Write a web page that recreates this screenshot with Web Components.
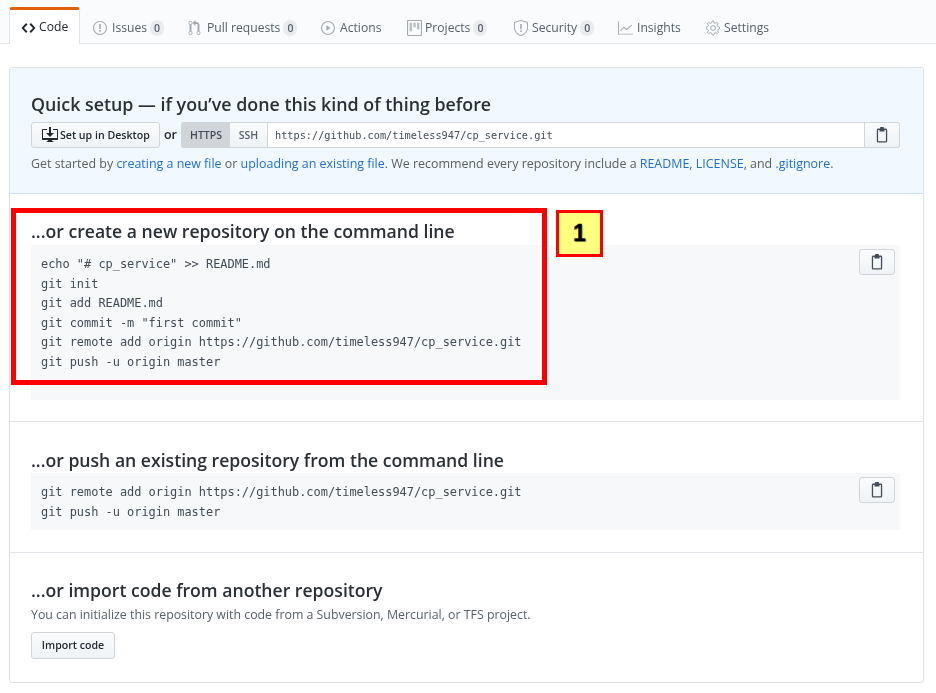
<!DOCTYPE html>
<html lang="en"><head><meta charset="utf-8"><title>Quick setup</title>
<style>
html,body{margin:0;background:#fff}
body{width:936px;height:693px;overflow:hidden;position:relative;font-family:"Open Sans","Noto Sans",sans-serif;color:#24292e}
a{color:#1f6fd6;text-decoration:none}
gh-tabs,gh-card{filter:blur(.3px)}
</style></head><body>
<gh-tabs>
  <gh-tab selected label="Code" icon="code"></gh-tab>
  <gh-tab label="Issues" icon="issue" count="0"></gh-tab>
  <gh-tab label="Pull requests" icon="pr" count="0"></gh-tab>
  <gh-tab label="Actions" icon="play"></gh-tab>
  <gh-tab label="Projects" icon="project" count="0"></gh-tab>
  <gh-tab label="Security" icon="shield" count="0"></gh-tab>
  <gh-tab label="Insights" icon="graph"></gh-tab>
  <gh-tab label="Settings" icon="gear"></gh-tab>
</gh-tabs>
<gh-card>
  <gh-section variant="blue" heading="Quick setup — if you’ve done this kind of thing before" style="height:126px">
    <gh-clone-bar url="https://github.com/timeless947/cp_service.git"></gh-clone-bar>
    <gh-note>Get started by <a href="#">creating a new file</a> or <a href="#">uploading an existing file</a>. We recommend every repository include a <a href="#">README</a>, <a href="#">LICENSE</a>, and <a href="#">.gitignore</a>.</gh-note>
  </gh-section>
  <gh-section variant="cmd" heading="...or create a new repository on the command line" style="height:228px">
    <gh-code style="height:155px">echo "# cp_service" &gt;&gt; README.md
git init
git add README.md
git commit -m "first commit"
git remote add origin https://github.com/timeless947/cp_service.git
git push -u origin master</gh-code>
  </gh-section>
  <gh-section variant="cmd2" heading="...or push an existing repository from the command line" style="height:131px">
    <gh-code style="height:57px">git remote add origin https://github.com/timeless947/cp_service.git
git push -u origin master</gh-code>
  </gh-section>
  <gh-section variant="imp" heading="...or import code from another repository" style="height:128px">
    <gh-note tight>You can initialize this repository with code from a Subversion, Mercurial, or TFS project.</gh-note>
    <gh-button>Import code</gh-button>
  </gh-section>
</gh-card>
<gh-callout number="1"></gh-callout>
<script>
const ICONS={
code:['0 0 14 16','<path d="M9.5 3L8 4.5 11.5 8 8 11.5 9.5 13 14 8 9.5 3zm-5 0L0 8l4.5 5L6 11.5 2.5 8 6 4.5 4.5 3z"/>'],
issue:['0 0 14 16','<path d="M7 2.1c3.25 0 5.9 2.65 5.9 5.9s-2.65 5.9-5.9 5.9A5.91 5.91 0 0 1 1.1 8C1.1 4.75 3.75 2.1 7 2.1zM7 1C3.14 1 0 4.14 0 8s3.14 7 7 7 7-3.14 7-7-3.14-7-7-7zm.8 3H6.2v5h1.6V4zm0 6H6.2v1.8h1.6V10z"/>'],
pr:['0 0 12 16','<path d="M11 11.28V5c-.03-.78-.34-1.47-.94-2.06C9.46 2.35 8.78 2.03 8 2H7V0L4 3l3 3V4h1c.27.02.48.11.69.31.21.2.3.42.31.69v6.28A1.993 1.993 0 0 0 10 15a1.993 1.993 0 0 0 1-3.72zm-1 2.92c-.66 0-1.2-.55-1.2-1.2 0-.65.55-1.2 1.2-1.2.65 0 1.2.55 1.2 1.2 0 .65-.55 1.2-1.2 1.2zM4 3c0-1.11-.89-2-2-2a1.993 1.993 0 0 0-1 3.72v6.56A1.993 1.993 0 0 0 2 15a1.993 1.993 0 0 0 1-3.72V4.72c.59-.34 1-.98 1-1.72zm-.8 10c0 .66-.55 1.2-1.2 1.2-.65 0-1.2-.55-1.2-1.2 0-.65.55-1.2 1.2-1.2.65 0 1.2.55 1.2 1.2zM2 4.2C1.34 4.2.8 3.65.8 3c0-.65.55-1.2 1.2-1.2.65 0 1.2.55 1.2 1.2 0 .65-.55 1.2-1.2 1.2z"/>'],
play:['0 0 14 16','<path fill-rule="evenodd" d="M7 1a7 7 0 1 0 0 14A7 7 0 0 0 7 1zm0 1.1a5.9 5.9 0 1 1 0 11.8A5.9 5.9 0 0 1 7 2.1z"/><path d="M5.4 5.3v5.4L9.6 8z"/>'],
project:['0 0 15 16','<path d="M10 9h2.4V2.6H10V9zM6.3 7h2.4V2.6H6.3V7zM2.6 11h2.4V2.6H2.6V11z" transform="translate(0 .2)" opacity=".75"/><path fill-rule="evenodd" d="M1.2 0h12.6c.66 0 1.2.54 1.2 1.2v13.6c0 .66-.54 1.2-1.2 1.2H1.2C.54 16 0 15.46 0 14.8V1.2C0 .54.54 0 1.2 0zm-.1 1.1v13.8h12.8V1.1H1.1z"/>'],
shield:['0 0 14 16','<path fill-rule="evenodd" d="M0 2l7-2 7 2v6.02C14 12.69 8.69 16 7 16c-1.69 0-7-3.31-7-7.98V2zm1 .75L7 1l6 1.75v5.27C13 12.1 8.45 15 7 15c-1.45 0-6-2.9-6-6.98V2.75z"/><path d="M6.2 4h1.6v5.2H6.2zM6.2 10.2h1.6V12H6.2z"/>'],
graph:['0 0 16 16','<path d="M16 15H0V1h1v13h15z"/><path d="M2.6 11.2l3.6-4 3 2.4L14.6 5" fill="none" stroke="currentColor" stroke-width="1.1"/>'],
gear:['0 0 14 16','<path fill="none" stroke="currentColor" stroke-width="1" stroke-linejoin="round" d="M13.5 8.8V7.2l-1.9-.6-.5-1.2.9-1.8-1.1-1.1-1.8.9-1.2-.5L7.8 1H6.2l-.6 1.9-1.2.5-1.8-.9-1.1 1.1.9 1.8-.5 1.2-1.9.6v1.6l1.9.6.5 1.2-.9 1.8 1.1 1.1 1.8-.9 1.2.5.6 1.9h1.6l.6-1.9 1.2-.5 1.8.9 1.1-1.1-.9-1.8.5-1.2z"/><circle cx="7" cy="8" r="2.4" fill="none" stroke="currentColor"/>'],
clip:['0 0 14 16','<path fill-rule="evenodd" d="M3.4 1.6H5V.9c0-.5.4-.9.9-.9h2.2c.5 0 .9.4.9.9v.7h1.6c.9 0 1.6.7 1.6 1.6v10.7c0 .9-.7 1.6-1.6 1.6H3.4c-.9 0-1.6-.7-1.6-1.6V3.2c0-.9.7-1.6 1.6-1.6zm0 1.3c-.2 0-.3.1-.3.3v10.7c0 .2.1.3.3.3h7.2c.2 0 .3-.1.3-.3V3.2c0-.2-.1-.3-.3-.3H9.5v1.6h-5V2.9H3.4z"/>'],
desktop:['0 0 16 16','<path d="M4 6h3V0h2v6h3l-4 4-4-4zm11-4h-4v1h4v8H1V3h4V2H1c-.55 0-1 .45-1 1v9c0 .55.45 1 1 1h5.34c-.25.61-.86 1.39-2.34 2h8c-1.48-.61-2.09-1.39-2.34-2H15c.55 0 1-.45 1-1V3c0-.55-.45-1-1-1z"/>']
};
function def(name,css,html){
  const C=class extends HTMLElement{
    constructor(){super();this.attachShadow({mode:'open'});}
    connectedCallback(){this.shadowRoot.innerHTML='<style>'+css+'</style>'+(typeof html==='function'?html(this):html);}
  };
  customElements.define(name,C);
}
const svg=(n,w,h,m)=>`<svg xmlns="http://www.w3.org/2000/svg" viewBox="${ICONS[n][0]}" width="${w}" height="${h}" fill="currentColor" aria-hidden="true"${m!==undefined?` style="margin-right:${m}px"`:''}>${ICONS[n][1]}</svg>`;

def('gh-tabs',`:host{display:flex;height:44px;box-sizing:border-box;padding:7px 0 0 9px;background:#fafbfc;border-bottom:1px solid #e1e4e8}`,`<slot></slot>`);

const tabW={Code:71,Issues:94,'Pull requests':134,Actions:86,Projects:107,Security:104,Insights:88,Settings:88};
const iconX={code:14,issue:13,pr:14,play:13,project:13,shield:13,graph:13,gear:13};
const iconW={code:15,issue:14,pr:13,play:14,project:15,shield:14,graph:15,gear:14};
const iconM={code:3,issue:5,pr:6,play:5,project:3,shield:4,graph:4,gear:4};
def('gh-tab',`
:host{display:block;flex:none;height:37px;box-sizing:border-box;color:#586069;font:12.15px/1 "Open Sans",sans-serif}
:host([selected]){background:#fff;color:#24292e;border:1px solid #e1e4e8;border-top:3px solid #e36209;border-bottom:0;border-radius:3px 3px 0 0;height:37px;position:relative;z-index:1}
.in{display:flex;align-items:center;height:100%;box-sizing:border-box;padding-top:1px}
:host(:not([selected])) .in{padding-top:5px}
svg{flex:none;color:#a3aab1}
:host([selected]) svg{color:#24292e}
b{font-weight:600;font-size:10.5px;color:#586069;background:#e9ebee;border-radius:8px;min-width:14px;height:16px;line-height:16px;text-align:center;margin-left:3px}
`,h=>{const n=h.getAttribute('icon'),l=h.getAttribute('label'),c=h.getAttribute('count');
  h.style.width=tabW[l]+'px';
  h.style.paddingLeft=(h.hasAttribute('selected')?iconX[n]-3:iconX[n])+'px';
  return `<div class="in">${svg(n,iconW[n],16,iconM[n])}<span>${l}</span>${c!==null?`<b>${c}</b>`:''}</div>`;});

def('gh-card',`:host{display:block;box-sizing:border-box;width:915px;height:616px;margin:23px 0 0 9px;border:1px solid #dfe2e5;border-radius:3px;overflow:hidden;background:#fff}`,`<slot></slot>`);

def('gh-section',`
:host{display:block;box-sizing:border-box;padding:0 23px 0 21px;border-bottom:1px solid #e1e4e8}
:host([variant=blue]){background:#f1f8ff;border-bottom-color:#c8e1ff;padding-top:24px}
:host([variant=cmd]){padding-top:25px}
:host([variant=cmd2]){padding-top:26px}
:host([variant=imp]){padding-top:25px;border-bottom:0}
h3{margin:0;font:600 17.63px/24px "Open Sans",sans-serif;color:#2b3036;white-space:nowrap}
:host([variant=blue]) h3{height:30px;font-size:17.83px}
:host([variant=cmd]) h3{height:26px}
:host([variant=cmd2]) h3{height:25px}
:host([variant=imp]) h3{height:23px}
`,h=>`<h3>${h.getAttribute('heading')}</h3><slot></slot>`);

def('gh-code',`
:host{display:block;box-sizing:border-box;position:relative;background:#f6f8fa;padding:10px 10px 0;color:#444d56}
pre{margin:0;font:11.95px/19.6px "DejaVu Sans Mono","Liberation Mono",monospace;letter-spacing:-.015px}
.b{position:absolute;top:4px;right:5px;width:36px;height:26px}
`,h=>`<pre>${h.textContent.replace(/&/g,'&amp;').replace(/</g,'&lt;').replace(/>/g,'&gt;')}</pre><div class="b"><gh-icon-button></gh-icon-button></div>`);

def('gh-icon-button',`
:host{display:flex;align-items:center;justify-content:center;box-sizing:border-box;width:36px;height:26px;border:1px solid #d1d5da;border-radius:3px;background:linear-gradient(#fafbfc,#eff3f6);color:#444d56}
`,`${svg('clip',14,16)}`);

def('gh-button',`
:host{display:inline-flex;align-items:center;box-sizing:border-box;height:27px;width:84px;justify-content:center;border:1px solid #d1d5da;border-radius:3px;background:linear-gradient(#fafbfc,#eff3f6);font:600 10.6px/1 "Open Sans",sans-serif;color:#24292e;margin-top:9px}
`,`<slot></slot>`);

def('gh-note',`
:host{display:block;font:12.44px/16px "Open Sans",sans-serif;color:#586069;margin-top:8px;white-space:nowrap}
:host([tight]){margin-top:6px;font-size:12.35px}
`,`<slot></slot>`);

def('gh-clone-bar',`
:host{display:flex;align-items:stretch;height:26px;font:600 10.6px/1 "Open Sans",sans-serif;color:#24292e}
.desk{display:flex;align-items:center;box-sizing:border-box;width:129px;padding-left:10px;border:1px solid #d1d5da;border-radius:3px;background:linear-gradient(#fafbfc,#eff3f6);white-space:nowrap}
.desk svg{margin-right:2px}
.or{display:flex;align-items:center;width:21px;justify-content:center;font-size:12.5px}
.g{display:flex;height:26px;box-sizing:border-box}
.t{display:flex;align-items:center;justify-content:center;box-sizing:border-box;font-weight:600;font-size:10.5px;color:#586069;border:1px solid #d1d5da}
.t.h{width:49px;background:#d1d5da;border-right:0;border-radius:3px 0 0 3px;color:#444d56}
.t.s{width:37px;background:linear-gradient(#fafbfc,#eff3f6);border-left:0;border-right:0}
.u{flex:1;display:flex;align-items:center;box-sizing:border-box;padding-left:7px;background:#fff;border:1px solid #d1d5da;font:10.25px/1 "DejaVu Sans Mono","Liberation Mono",monospace;font-weight:400;color:#444d56;white-space:nowrap}
.c{display:flex;align-items:center;justify-content:center;box-sizing:border-box;width:35px;border:1px solid #d1d5da;border-left:0;border-radius:0 3px 3px 0;background:linear-gradient(#fafbfc,#eff3f6);color:#444d56}
`,h=>`<div class="desk">${svg('desktop',16,16)}<span>Set up in Desktop</span></div><div class="or">or</div><div class="g"><div class="t h">HTTPS</div><div class="t s">SSH</div></div><div class="u">${h.getAttribute('url')}</div><div class="c">${svg('clip',14,16)}</div>`);

def('gh-callout',`
:host{display:block;position:absolute;left:0;top:0;width:0;height:0}
.box{position:absolute;left:11px;top:208px;width:536px;height:177px;box-sizing:border-box;border:5px solid #f00;pointer-events:none}
.n{position:absolute;left:556px;top:210px;width:47px;height:47px;box-sizing:border-box;border:3px solid #f00;background:#ffff80;display:flex;align-items:center;justify-content:center;font:700 23px/1 "Liberation Sans",sans-serif;color:#000;-webkit-text-stroke:.3px #000;text-shadow:1px 1px 1px rgba(0,0,0,.4)}
`,h=>`<div class="box"></div><div class="n">${h.getAttribute('number')}</div>`);
</script>
</body></html>
